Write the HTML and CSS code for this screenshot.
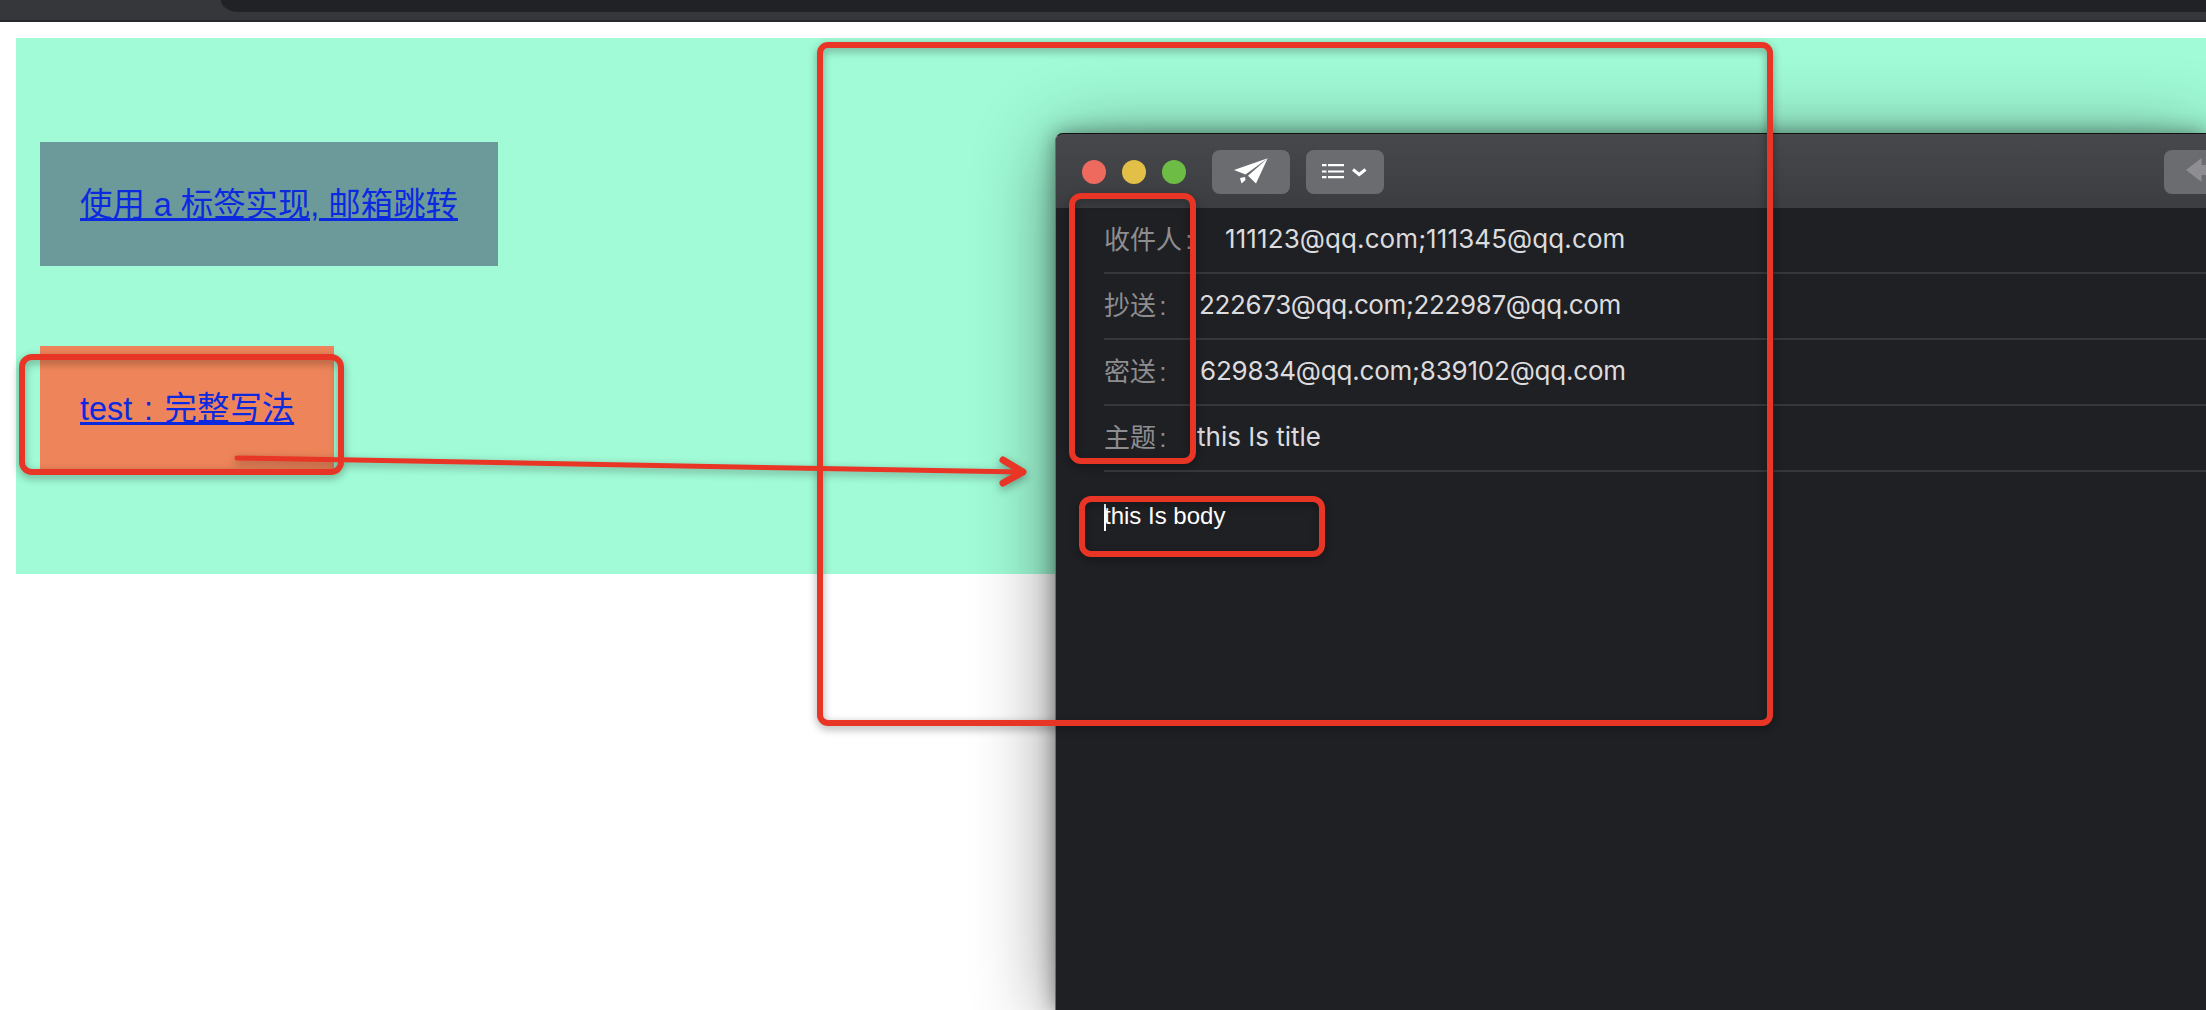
FILE: index.html
```html
<!DOCTYPE html>
<html lang="zh-CN">
<head>
<meta charset="utf-8">
<meta name="viewport" content="width=device-width, initial-scale=1">
<title>a 标签邮箱跳转</title>
<link rel="stylesheet" href="styles.css">
</head>
<body>
<div class="topbar"><div class="tab"></div></div>

<div class="panel">
  <div class="demo demo-plain"><a href="#">使用 a 标签实现, 邮箱跳转</a></div>
  <div class="demo demo-full"><a href="#">test : 完整写法</a></div>
</div>

<!-- 邮件窗口 -->
<section class="mail">
  <div class="titlebar">
    <span class="light red"></span>
    <span class="light yellow"></span>
    <span class="light green"></span>
    <span class="tool send">
      <svg viewBox="0 0 60 44" width="60" height="44" fill="#fff"><path d="M9 20 42.7 8.3 20.5 24.5z"/><path d="M42.7 8.3 31 33.5 23 25.8z"/><path d="M15 28l5-1 .5 3-4 3.5z"/></svg>
    </span>
    <span class="tool list">
      <svg viewBox="0 0 60 44" width="60" height="44" fill="#fff"><path d="M7 14h4.500v2.200H7zM13 14h16v2.200H13zM7 20.400h4.500v2.200H7zM13 20.400h16v2.200H13zM7 26h4.500v2.200H7zM13 26h16v2.200H13z"/><path d="M38 19.500 44.200 24.500 50.500 19.500" fill="none" stroke="#fff" stroke-width="3"/></svg>
    </span>
    <span class="tool back">
      <svg viewBox="0 0 78 44" width="78" height="44" fill="#8e8e92"><path d="M22 20 37.600 8v7H60v10H37.600v7z"/></svg>
    </span>
  </div>
  <div class="fields">
    <div class="field"><span class="label">收件人 :</span><span class="value to">111123@qq.com;111345@qq.com</span></div>
    <div class="field"><span class="label">抄送 :</span><span class="value cc">222673@qq.com;222987@qq.com</span></div>
    <div class="field"><span class="label">密送 :</span><span class="value bcc">629834@qq.com;839102@qq.com</span></div>
    <div class="field"><span class="label">主题 :</span><span class="value">this Is title</span></div>
  </div>
  <div class="body"><span class="caret"></span>this Is body</div>
</section>

<!-- 截图上的红色标注 -->
<svg class="marks" viewBox="0 0 2206 1010" width="2206" height="1010" fill="none" stroke="#e93525" stroke-width="6" stroke-linecap="round" stroke-linejoin="round">
  <rect x="820" y="45" width="950" height="678" rx="8"/>
  <rect x="22" y="357" width="319" height="115" rx="10"/>
  <rect x="1072" y="196" width="121" height="265" rx="9"/>
  <rect x="1082" y="499" width="240" height="55" rx="9"/>
  <path d="M237 458 1020 472" stroke-width="5"/>
  <path d="M1003 460 1023 472 1003 483" stroke-width="7"/>
</svg>
</body>
</html>
```

FILE: styles.css
```css
*{box-sizing:border-box;}
html,body{margin:0;height:1010px;overflow:hidden;background:#fff;}
body{position:relative;font-family:"Liberation Sans","Noto Sans CJK SC",sans-serif;}

.topbar{height:22px;background:#36373b;border-bottom:2px solid #27282b;}
.tab{height:12px;margin-left:221px;background:#212226;border-bottom-left-radius:18px 12px;}

/* 绿色演示区 */
.panel{margin:16px 0 0 16px;padding:104px 24px;background:#a0fbd6;display:flex;flex-direction:column;align-items:flex-start;gap:80px;}
.demo{height:124px;padding:42px 40px 0;font-size:32.4px;line-height:42px;white-space:nowrap;}
.demo a{color:#0b2ae0;}
.demo-plain{background:#6c9a9a;}
.demo-full{background:#ee855a;word-spacing:2.7px;}

/* 邮件窗口 */
.mail{position:absolute;left:1055px;right:0;top:133px;bottom:0;background:#1f2024;border-top:1px solid #111;border-left:1px solid #6c6d70;border-top-left-radius:8px;box-shadow:0 0 20px rgba(0,0,0,.4),0 10px 80px rgba(0,0,0,.45);}
.titlebar{height:74px;display:flex;align-items:center;gap:16px;padding:2px 0 0 26px;overflow:hidden;background:linear-gradient(#47484b,#3c3d40);border-top-left-radius:7px;}
.light{flex:0 0 24px;height:24px;border-radius:50%;}
.red{background:#ee6a5f;}
.yellow{background:#e2bf46;}
.green{background:#6cbc45;}
.tool{flex:0 0 78px;height:44px;border-radius:8px;background:#6b6c70;display:flex;align-items:center;justify-content:center;}
.send{margin-left:10px;padding-left:8px;}
.back{margin-left:auto;margin-right:-36px;}

.fields{margin-left:48px;}
.field{height:66px;display:flex;align-items:center;border-bottom:2px solid #37383c;font-size:26px;}
.label{flex:0 0 93px;padding-bottom:5px;color:#8e8e90;white-space:pre;word-spacing:-4px;}
.value{padding-bottom:3px;font-family:Inter,"Liberation Sans",sans-serif;color:#dcdcde;}
.to{margin-left:28px;letter-spacing:.1px;}
.cc{margin-left:2px;letter-spacing:-.36px;}
.bcc{margin-left:3px;letter-spacing:-.2px;}

.body{padding:29px 0 0 48px;color:#fff;font-size:24px;line-height:30px;}
.caret{display:inline-block;width:2px;height:27px;margin-right:-2px;background:#fff;vertical-align:middle;}

.marks{position:absolute;left:0;top:0;filter:drop-shadow(0 3px 4px rgba(0,0,0,.35));}
```
